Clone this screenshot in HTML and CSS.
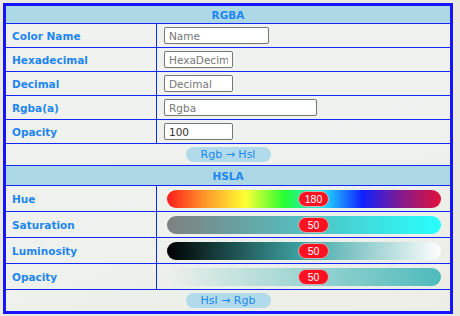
FILE: index.html
```html
<!DOCTYPE html>
<html lang="en">
<head>
    <meta charset="UTF-8">
    <meta name="viewport" content="width=device-width, initial-scale=1.0">
    <title>Color Converter</title>
    <link rel="stylesheet" href="styles.css">
</head>
<body>
    <table class="converter">
        <tr class="head-row">
            <th colspan="2">RGBA</th>
        </tr>
        <tr class="field-row">
            <td class="label">Color Name</td>
            <td class="field"><input type="text" class="input-name" placeholder="Name"></td>
        </tr>
        <tr class="field-row">
            <td class="label">Hexadecimal</td>
            <td class="field"><input type="text" class="input-short" placeholder="HexaDecimal"></td>
        </tr>
        <tr class="field-row">
            <td class="label">Decimal</td>
            <td class="field"><input type="text" class="input-short" placeholder="Decimal"></td>
        </tr>
        <tr class="field-row">
            <td class="label">Rgba(a)</td>
            <td class="field"><input type="text" class="input-rgba" placeholder="Rgba"></td>
        </tr>
        <tr class="field-row">
            <td class="label">Opacity</td>
            <td class="field"><input type="text" class="input-short" value="100"></td>
        </tr>
        <tr class="action-row">
            <td colspan="2"><button class="convert">Rgb → Hsl</button></td>
        </tr>

        <tr class="head-row head-hsla">
            <th colspan="2">HSLA</th>
        </tr>
        <tr class="slider-row">
            <td class="label">Hue</td>
            <td class="slider-cell">
                <div class="track track-hue"><span class="thumb">180</span></div>
            </td>
        </tr>
        <tr class="slider-row">
            <td class="label">Saturation</td>
            <td class="slider-cell">
                <div class="track track-sat"><span class="thumb">50</span></div>
            </td>
        </tr>
        <tr class="slider-row">
            <td class="label">Luminosity</td>
            <td class="slider-cell">
                <div class="track track-lum"><span class="thumb">50</span></div>
            </td>
        </tr>
        <tr class="slider-row">
            <td class="label">Opacity</td>
            <td class="slider-cell">
                <div class="track track-alpha"><span class="thumb">50</span></div>
            </td>
        </tr>
        <tr class="action-row action-last">
            <td colspan="2"><button class="convert">Hsl → Rgb</button></td>
        </tr>
    </table>
</body>
</html>
```

FILE: styles.css
```css
* {
    box-sizing: border-box;
}

body {
    margin: 3px;
    background-color: #e9e9e2;
    font-family: 'DejaVu Sans', Verdana, sans-serif;
}

.converter {
    width: 450px;
    border: 3px solid #1414ff;
    border-spacing: 0;
    background: linear-gradient(160deg, #eff2ee 0%, #eef1ec 60%, #ecede6 100%);
}

.converter th,
.converter td {
    padding: 0;
    border-bottom: 1px solid #1428f5;
}

.converter tr:last-child td {
    border-bottom: 0;
}

.head-row th {
    height: 18px;
    background-color: #add8e6;
    color: #1e86f2;
    font-size: 10.5px;
    font-weight: bold;
    text-align: center;
}

.head-hsla th {
    height: 20px;
}

.label {
    width: 151px;
    padding-left: 6px !important;
    border-right: 1px solid #1428f5;
    color: #1e86f2;
    font-size: 10.5px;
    font-weight: bold;
}

.field-row td {
    height: 24px;
}

.field {
    padding-left: 7px !important;
}

.field input {
    display: block;
    height: 17px;
    padding: 0 4px;
    border: 1px solid #777;
    border-radius: 2px;
    background-color: #fff;
    color: #333;
    font-family: 'DejaVu Sans', Verdana, sans-serif;
    font-size: 10.5px;
}

.field input::placeholder {
    color: #777;
}

.input-name {
    width: 105px;
}

.input-short {
    width: 69px;
}

.input-rgba {
    width: 153px;
}

.action-row td {
    height: 22px;
    text-align: center;
}

.action-last td {
    height: 21px;
}

.convert {
    display: block;
    width: 85px;
    height: 15px;
    margin: 0 auto;
    padding: 0;
    border: 0;
    border-radius: 8px;
    background-color: #b1dbea;
    color: #1e86f2;
    font-family: 'DejaVu Sans', Verdana, sans-serif;
    font-size: 11px;
    line-height: 15px;
}

.slider-row td {
    height: 26px;
}

.slider-cell {
    padding: 0 9px 0 10px !important;
}

.track {
    position: relative;
    height: 18px;
    border-radius: 9px;
}

.track-hue {
    background: linear-gradient(to right, #ff1c1c, #ff9a2a, #ffff33, #26ff33, #22ddff, #1020ff, #851a8c, #e2103a);
}

.track-sat {
    background: linear-gradient(to right, hsl(180, 0%, 50%), hsl(180, 100%, 58%));
}

.track-lum {
    background: linear-gradient(to right, #000, hsl(180, 45%, 45%), #fff);
}

.track-alpha {
    background: linear-gradient(to right, hsla(180, 45%, 52%, 0), hsl(180, 45%, 52%));
}

.thumb {
    position: absolute;
    top: 1px;
    left: 131px;
    width: 31px;
    height: 16px;
    border: 1px solid #c9b3b3;
    border-radius: 8px;
    background-color: #ff1122;
    color: #fff;
    font-family: 'Liberation Sans', Arial, sans-serif;
    font-size: 10.5px;
    line-height: 14px;
    text-align: center;
}
```
